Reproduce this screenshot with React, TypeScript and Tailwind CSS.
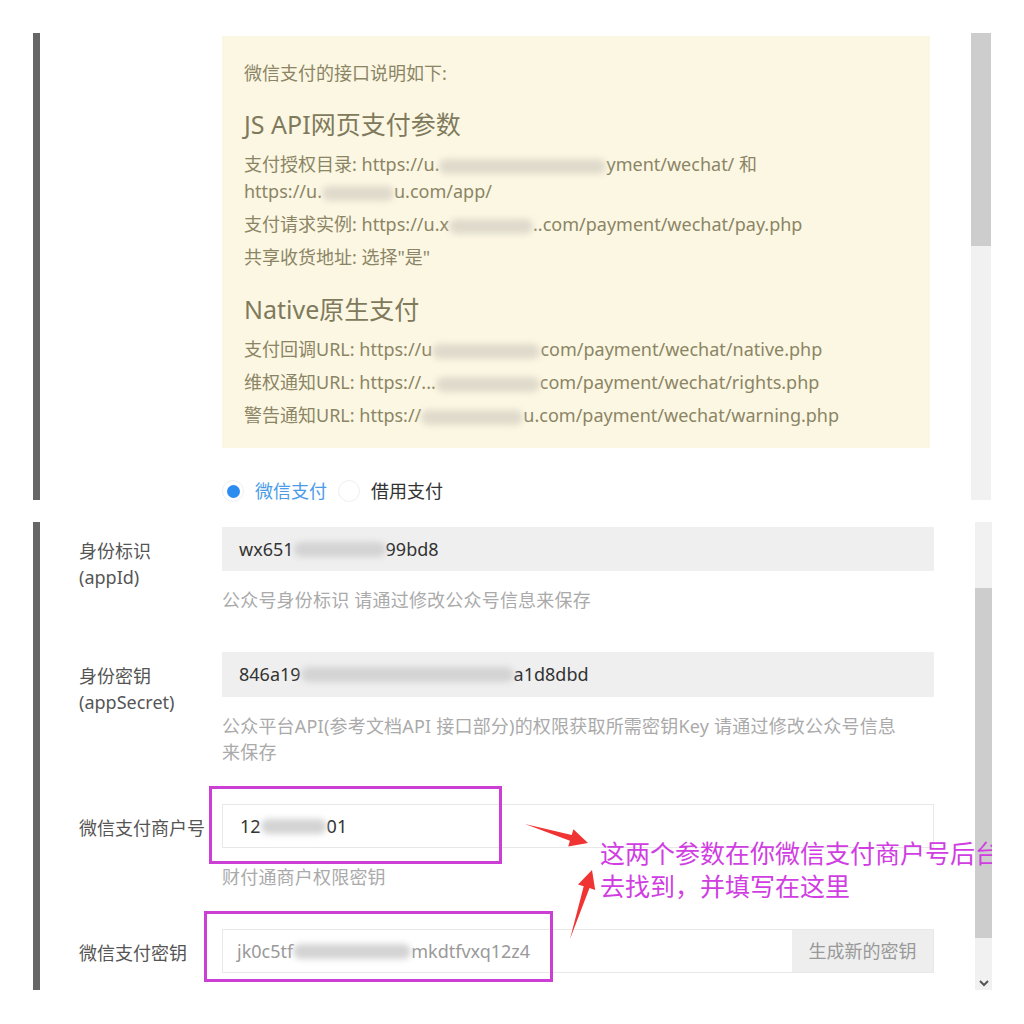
import React from "react";

function Smudge({ w, tone = "yellow" }: { w: number; tone?: "yellow" | "gray" }) {
  return (
    <span
      className={`inline-block h-[15px] rounded-full blur-[3px] align-middle ${
        tone === "yellow" ? "bg-[#dfdacb]" : "bg-[#d3d3d3]"
      }`}
      style={{ width: w }}
    />
  );
}

function Radio({ checked, label }: { checked: boolean; label: string }) {
  return (
    <div className="flex items-center gap-[11px]">
      <span className="flex h-[22px] w-[22px] items-center justify-center rounded-full border border-[#f0f0f0] bg-white">
        {checked && <span className="h-[13px] w-[13px] rounded-full bg-[#2d8cf0]" />}
      </span>
      <span className={checked ? "text-[#4a9be8]" : "text-[#333]"}>{label}</span>
    </div>
  );
}

function FormRow({
  label,
  children,
  help,
}: {
  label: React.ReactNode;
  children: React.ReactNode;
  help: React.ReactNode;
}) {
  return (
    <div className="mb-[39px] flex">
      <div className="w-[143px] pt-[11px] leading-[26px] text-[#555]">{label}</div>
      <div className="w-[712px]">
        {children}
        <div className="mt-[16px] text-[#aaa] leading-[26px] tracking-[0.2px]">{help}</div>
      </div>
    </div>
  );
}

export default function App() {
  return (
    <div className="relative h-[1024px] w-[1024px] overflow-hidden bg-white pt-[33px] text-[18px] font-['Noto_Sans','Noto_Sans_CJK_SC',sans-serif]">
      {/* 接口说明 */}
      <div className="flex h-[467px]">
        <div className="ml-[33px] w-[7px] bg-[#666]" />
        <div className="w-[931px] pl-[182px] pt-[3px]">
          <div className="h-[412px] w-[708px] bg-[#fcf7e3] px-[22px] pt-[24px] text-[#8b8565]">
            <p className="leading-[26px]">微信支付的接口说明如下:</p>
            <h3 className="mt-[20px] mb-[9px] text-[25px] leading-[36px] text-[#7f7a5c]">JS API网页支付参数</h3>
            <p className="mb-[6px] leading-[27px]">
              支付授权目录: https://u.
              <Smudge w={167} />
              yment/wechat/ 和<br />
              https://u.
              <Smudge w={72} />
              u.com/app/
            </p>
            <p className="mb-[6px] leading-[27px]">
              支付请求实例: https://u.x
              <Smudge w={84} />
              ..com/payment/wechat/pay.php
            </p>
            <p className="mb-[6px] leading-[27px]">共享收货地址: 选择"是"</p>
            <h3 className="mt-[20px] mb-[9px] text-[25px] leading-[36px] text-[#7f7a5c]">Native原生支付</h3>
            <p className="mb-[6px] leading-[27px]">
              支付回调URL: https://u
              <Smudge w={108} />
              com/payment/wechat/native.php
            </p>
            <p className="mb-[6px] leading-[27px]">
              维权通知URL: https://...
              <Smudge w={104} />
              com/payment/wechat/rights.php
            </p>
            <p className="mb-[6px] leading-[27px]">
              警告通知URL: https://
              <Smudge w={102} />
              u.com/payment/wechat/warning.php
            </p>
          </div>
          <div className="mt-[31px] flex h-[24px] items-center gap-[11px]">
            <Radio checked label="微信支付" />
            <Radio checked={false} label="借用支付" />
          </div>
        </div>
        <div className="flex w-[20px] flex-col">
          <div className="h-[213px] bg-[#cdcdcd]" />
          <div className="flex-1 bg-[#f1f1f1]" />
        </div>
      </div>

      {/* 参数表单 */}
      <div className="mt-[22px] flex h-[468px]">
        <div className="ml-[33px] w-[7px] bg-[#666]" />
        <div className="w-[935px] pl-[39px] pt-[5px]">
          <FormRow
            label={
              <>
                身份标识
                <br />
                (appId)
              </>
            }
            help="公众号身份标识 请通过修改公众号信息来保存"
          >
            <div className="flex h-[44px] items-center bg-[#efefef] pl-[17px] text-[#333]">
              wx651
              <Smudge w={92} tone="gray" />
              99bd8
            </div>
          </FormRow>
          <FormRow
            label={
              <>
                身份密钥
                <br />
                (appSecret)
              </>
            }
            help={
              <>
                公众平台API(参考文档API 接口部分)的权限获取所需密钥Key 请通过修改公众号信息
                <br />
                来保存
              </>
            }
          >
            <div className="flex h-[45px] items-center bg-[#efefef] pl-[17px] text-[#333]">
              846a19
              <Smudge w={213} tone="gray" />
              a1d8dbd
            </div>
          </FormRow>
          <FormRow label="微信支付商户号" help="财付通商户权限密钥">
            <div className="flex h-[44px] items-center border border-[#e8e8e8] bg-white pl-[17px] text-[#333]">
              12
              <Smudge w={66} tone="gray" />
              01
            </div>
          </FormRow>
          <div className="flex">
            <div className="w-[143px] pt-[11px] leading-[26px] text-[#555]">微信支付密钥</div>
            <div className="flex h-[44px] w-[712px] border border-[#e8e8e8] bg-white">
              <div className="flex flex-1 items-center pl-[14px] text-[#999]">
                jk0c5tf
                <Smudge w={118} tone="gray" />
                mkdtfvxq12z4
              </div>
              <div className="flex w-[141px] items-center justify-center bg-[#eee] text-[#999]">生成新的密钥</div>
            </div>
          </div>
        </div>
        <div className="flex w-[17px] flex-col">
          <div className="h-[66px] bg-[#f1f1f1]" />
          <div className="h-[350px] bg-[#cdcdcd]" />
          <div className="flex flex-1 items-end justify-center bg-[#f1f1f1] pb-[3px]">
            <svg width="10" height="7" viewBox="0 0 10 7">
              <path d="M1 1l4 4 4-4" fill="none" stroke="#555" strokeWidth="2" />
            </svg>
          </div>
        </div>
      </div>

      {/* 标注 */}
      <div className="pointer-events-none absolute left-[209px] top-[786px] h-[78px] w-[293px] border-[3px] border-[#cc3fd4]" />
      <div className="pointer-events-none absolute left-[204px] top-[911px] h-[71px] w-[349px] border-[3px] border-[#cc3fd4]" />
      <div className="pointer-events-none absolute left-[600px] top-[836px] w-[392px] overflow-hidden whitespace-nowrap text-[25px] leading-[33px] text-[#d03ee2] font-['Noto_Sans_CJK_SC',sans-serif]">
        这两个参数在你微信支付商户号后台
        <br />
        去找到，并填写在这里
      </div>
      <svg className="pointer-events-none absolute left-0 top-0" width="1024" height="1024" viewBox="0 0 1024 1024">
        <polygon
          points="525,824 569.9,840.7 568.2,846.4 588,843 573.4,829.2 571.7,834.9"
          fill="#f03434"
        />
        <polygon
          points="570,939 589.5,888.1 595.2,889.9 592,870 578,884.5 583.7,886.3"
          fill="#f03434"
        />
      </svg>
    </div>
  );
}
